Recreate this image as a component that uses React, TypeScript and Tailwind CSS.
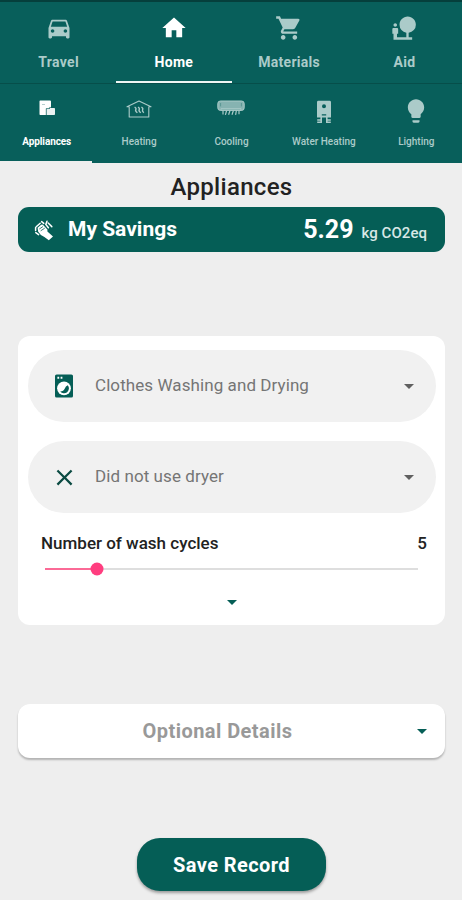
import React from "react";
import {
  MdDirectionsCar,
  MdHome,
  MdShoppingCart,
  MdNaturePeople,
  MdLightbulb,
  MdArrowDropDown,
  MdClose,
} from "react-icons/md";

const AppliancesIcon = () => (
  <svg width="16" height="16" viewBox="0 0 16 16" fill="currentColor">
    <path d="M1.2 0.5H11Q12 0.5 12 1.5V7.6H10.4V8.6H7V15H1.2Q0.5 15 0.5 14.2V1.2Q0.5 0.5 1.2 0.5Z" />
    <path d="M7.5 9.1H10.8V8H15.2Q16 8 16 8.8V14.2Q16 15 15.2 15H7.5Z" opacity="0.92" />
    <path d="M7 15V8.6H10.4V7.4H12M3 4.5H6" fill="none" stroke="#075f5a" strokeWidth="0.6" opacity="0.5" />
  </svg>
);

const HeatingIcon = () => (
  <svg width="26" height="18" viewBox="0 0 26 18" fill="none" stroke="currentColor" strokeWidth="1.1">
    <path d="M3.2 6.8H1L13 1L25 6.8H22.8V17H3.2Z" strokeLinejoin="round" />
    <path d="M8.6 7.2Q10.6 8.2 9.8 9.6T11.4 12.8M12 7.2Q14 8.2 13.2 9.6T14.8 12.8M15.4 7.2Q17.4 8.2 16.6 9.6T17.8 12.8" strokeWidth="1.4" />
  </svg>
);

const CoolingIcon = () => (
  <svg width="28" height="16" viewBox="0 0 28 16" fill="none" stroke="currentColor">
    <rect x="0.8" y="1" width="26.4" height="9.4" rx="2.6" fill="currentColor" fillOpacity="0.78" strokeWidth="1" />
    <path d="M4 10.5V8.6H24V10.5" strokeWidth="0.8" />
    <path d="M3.6 3V6.4M24.4 3V6.4" stroke="#075f5a" strokeWidth="0.7" opacity="0.5" />
    <path d="M6 10.5V14.4M9.6 10.5L8.4 14.8M13 10.5L11.6 14.8M16.4 10.5L15 14.8M19.4 10.5L18.6 14.8M22 10.5V14.2" strokeWidth="1.2" />
  </svg>
);

const WaterHeatingIcon = () => (
  <svg width="16" height="24" viewBox="0 0 16 24" fill="currentColor">
    <path
      fillRule="evenodd"
      d="M2.4 0.8H13.6Q15 0.8 15 2.2V17.6H1V2.2Q1 0.8 2.4 0.8ZM8 4.2A2 2 0 1 0 8 8.2A2 2 0 1 0 8 4.2ZM5.8 14.2V15.4H10.2V14.2Z"
    />
    <path d="M5.2 17V20H1.2M5.2 19.6V23M10.8 17V20H14.8M10.8 19.6V23M1.2 22.2H5.6M10.4 22.2H14.8" fill="none" stroke="currentColor" strokeWidth="1.6" />
  </svg>
);

const ClapIcon = () => (
  <svg width="20" height="22" viewBox="0 0 20 22" fill="none" stroke="white" strokeLinecap="round">
    <path d="M3.6 8.8L7.2 5.8Q8.6 5.2 9.6 6.6L13.4 10.6V12.6L19 17.6L14.8 21.2L10.4 18Q6.4 16.6 4.2 12.8Z" fill="white" stroke="none" />
    <path d="M2.2 7.8L6.2 4.2M1.6 8.4V11.4M1.8 13.6L4.6 15.6M7.6 2.6L9.8 4.4M13 2.2L11.8 5.4L14.4 8.8M14.2 4L17.8 7.6" strokeWidth="1.5" />
    <path d="M5.6 9.8L8.6 7.8M7 11.6L10.4 9.4" stroke="#055e56" strokeWidth="0.8" />
  </svg>
);

const WasherIcon = () => (
  <svg width="18" height="24" viewBox="0 0 18 24">
    <rect x="0" y="0.5" width="18" height="23" rx="1.6" fill="#055e56" />
    <path d="M2.4 2.8H4.2V4.8H2.4ZM5.6 2.8H7.4V4.8H5.6Z" fill="white" />
    <circle cx="9" cy="14.3" r="6.9" fill="white" />
    <path d="M12.8 11.2A4.9 4.9 0 0 1 5.2 17.5Q8.6 17.4 9.8 14.6Q10.6 12.2 12.8 11.2Z" fill="#055e56" />
  </svg>
);

const mainTabs = [
  { label: "Travel", icon: <MdDirectionsCar size={28} /> },
  { label: "Home", icon: <MdHome size={28} />, active: true },
  { label: "Materials", icon: <MdShoppingCart size={28} /> },
  { label: "Aid", icon: <MdNaturePeople size={28} /> },
];

const homeTabs = [
  { label: "Appliances", icon: <AppliancesIcon />, active: true },
  { label: "Heating", icon: <HeatingIcon /> },
  { label: "Cooling", icon: <CoolingIcon /> },
  { label: "Water Heating", icon: <WaterHeatingIcon /> },
  { label: "Lighting", icon: <MdLightbulb size={28} className="-mt-[3px]" /> },
];

interface SelectRowProps {
  icon: React.ReactNode;
  label: string;
}

const SelectRow: React.FC<SelectRowProps> = ({ icon, label }) => (
  <button className="flex h-[72px] w-full items-center rounded-full bg-[#f1f1f1] pr-[15px] pl-[26px]">
    <span className="flex w-5 justify-center text-[#0a4a42]">{icon}</span>
    <span className="ml-[21px] flex-1 text-left text-[17px] tracking-[0.08px] text-[#757575]">{label}</span>
    <MdArrowDropDown size={24} className="text-[#606060]" />
  </button>
);

const App: React.FC = () => {
  const cycles = 5;
  const maxCycles = 36;

  return (
    <div className="h-[900px] w-[462px] overflow-hidden bg-[#eeeeee] font-['Roboto',sans-serif]">
      <header className="border-t-2 border-[#053f3c] bg-[#085f5b]">
        {/* Main tabs */}
        <nav className="grid h-[82px] grid-cols-4 border-b border-[#064e4a] pl-px">
          {mainTabs.map((tab) => (
            <button
              key={tab.label}
              className={`flex flex-col items-center border-b-2 pt-3 ${
                tab.active ? "border-[#eef5f4] text-white" : "border-transparent text-[#abcbc9]"
              }`}
            >
              {tab.icon}
              <span className="mt-[10px] text-[14px] leading-5 font-bold tracking-[0.3px]">{tab.label}</span>
            </button>
          ))}
        </nav>

        {/* Home categories */}
        <nav className="grid h-[79px] grid-cols-5">
          {homeTabs.map((tab) => (
            <button
              key={tab.label}
              className={`flex flex-col items-center border-b-2 pt-[13px] pl-px whitespace-nowrap ${
                tab.active ? "border-[#eeeeee] text-white" : "border-transparent text-[#abcbc9]"
              }`}
            >
              <span className="flex h-[30px] items-start justify-center pt-[3px]">{tab.icon}</span>
              <span
                className={`mt-[8px] text-[10px] leading-[14px] ${
                  tab.active ? "font-bold tracking-[-0.1px]" : "font-medium"
                }`}
              >
                {tab.label}
              </span>
            </button>
          ))}
        </nav>
      </header>

      <main className="px-[18px]">
        <h1 className="mt-2 pl-px text-center text-[24px] leading-8 font-medium tracking-[0.3px] text-[#222]">
          Appliances
        </h1>

        <section className="mt-1 flex h-[45px] w-[427px] items-center rounded-[11px] bg-[#055e56] pr-[18px] pl-4 text-white">
          <ClapIcon />
          <span className="ml-[14px] text-[21px] font-bold">My Savings</span>
          <span className="ml-auto flex items-baseline gap-2">
            <span className="text-[25px] font-bold">5.29</span>
            <span className="text-[15px] font-medium tracking-[0.05px] text-[#d8e8e6]">kg CO2eq</span>
          </span>
        </section>

        <section className="mt-[84px] h-[289px] w-[427px] rounded-[12px] bg-white pt-[14px] pr-[9px] pl-[10px]">
          <div className="space-y-[19px]">
            <SelectRow icon={<WasherIcon />} label="Clothes Washing and Drying" />
            <SelectRow icon={<MdClose size={27} className="shrink-0" />} label="Did not use dryer" />
          </div>

          <div className="mt-[19px] flex justify-between pr-[9px] pl-[13px] text-[17px] leading-[22px] font-medium text-[#222]">
            <span>Number of wash cycles</span>
            <span>{cycles}</span>
          </div>

          <div className="relative mt-[14px] mr-[18px] ml-[17px] h-[2px] bg-[#dedede]">
            <div className="h-full bg-[#fb6a96]" style={{ width: `${(cycles / maxCycles) * 100}%` }} />
            <div
              className="absolute top-1/2 h-[13px] w-[13px] -translate-x-1/2 -translate-y-1/2 rounded-full bg-[#ff3d7f]"
              style={{ left: `${(cycles / maxCycles) * 100}%` }}
            />
          </div>

          <div className="mt-5 flex justify-center text-[#055e56]">
            <MdArrowDropDown size={24} />
          </div>
        </section>

        <button className="mt-[79px] flex h-[54px] w-[427px] items-center rounded-[12px] bg-white pr-[11px] shadow-[0_2px_2px_rgba(0,0,0,0.25)]">
          <span className="flex-1 pl-[7px] text-center text-[20px] font-bold tracking-[0.45px] text-[#999]">
            Optional Details
          </span>
          <MdArrowDropDown size={24} className="text-[#055e56]" />
        </button>

        <button className="mt-20 ml-[119px] flex h-[53px] w-[189px] items-center justify-center rounded-[23px] bg-[#055e56] text-[20px] font-bold tracking-[0.4px] text-white shadow-[0_2px_3px_rgba(0,0,0,0.35)]">
          Save Record
        </button>
      </main>
    </div>
  );
};

export default App;
